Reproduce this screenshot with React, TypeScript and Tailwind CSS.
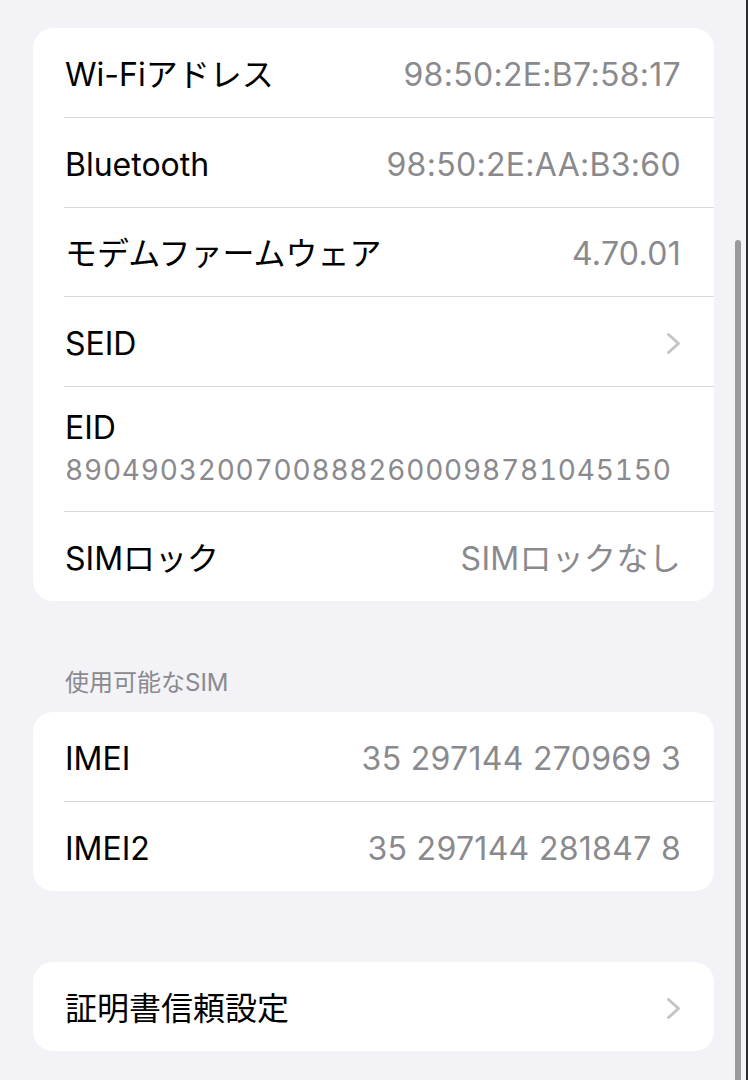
import React from 'react';

const Chevron: React.FC = () => (
  <svg width="15" height="23" viewBox="0 0 15 23" fill="none" className="shrink-0">
    <path d="M2.5 2.5 L12.5 11.5 L2.5 20.5" stroke="#c4c4c7" strokeWidth="3" strokeLinecap="round" strokeLinejoin="round" />
  </svg>
);

type RowProps = {
  label: string;
  value?: string;
  chevron?: boolean;
  first?: boolean;
  h: string;
};

const Row: React.FC<RowProps> = ({ label, value, chevron, first, h }) => (
  <div
    className={`${h} ml-[31px] pl-[1px] pr-[33px] pt-1 flex items-center justify-between ${
      first ? '' : 'border-t border-[#d8d8dc]'
    }`}
  >
    <span className="text-[32px] leading-[40px] text-black whitespace-nowrap">{label}</span>
    {value && (
      <span className="text-[32px] leading-[40px] tracking-[0.3px] text-[#8a8a8e] whitespace-nowrap">{value}</span>
    )}
    {chevron && <Chevron />}
  </div>
);

export default function App() {
  return (
    <div className="relative h-[1080px] w-full overflow-hidden bg-[#f2f2f7] border-r-2 border-[#2c2c2e] font-[Inter,'Noto_Sans_CJK_JP',sans-serif]">
      <div className="pt-[28px] pl-[33px] pr-[32px]">
        {/* Network info */}
        <div className="bg-white rounded-[20px]">
          <Row first h="h-[89px]" label="Wi-Fiアドレス" value="98:50:2E:B7:58:17" />
          <Row h="h-[90px]" label="Bluetooth" value="98:50:2E:AA:B3:60" />
          <Row h="h-[89px]" label="モデムファームウェア" value="4.70.01" />
          <Row h="h-[90px]" label="SEID" chevron />
          <div className="h-[125px] ml-[31px] pl-[1px] pr-[33px] pt-[2px] flex flex-col justify-center border-t border-[#d8d8dc]">
            <span className="text-[32px] leading-[40px] text-black">EID</span>
            <span className="text-[28px] leading-[44px] text-[#8a8a8e] tracking-[0.8px] tabular-nums whitespace-nowrap">
              89049032007008882600098781045150
            </span>
          </div>
          <Row h="h-[90px]" label="SIMロック" value="SIMロックなし" />
        </div>

        {/* Available SIM */}
        <div className="h-[111px] flex items-end pl-[32px] pb-[15px]">
          <span className="text-[24px] leading-[28px] text-[#8a8a8e]">使用可能なSIM</span>
        </div>
        <div className="bg-white rounded-[20px]">
          <Row first h="h-[89px]" label="IMEI" value="35 297144 270969 3" />
          <Row h="h-[90px]" label="IMEI2" value="35 297144 281847 8" />
        </div>

        {/* Certificates */}
        <div className="h-[71px]" />
        <div className="bg-white rounded-[20px]">
          <Row first h="h-[89px]" label="証明書信頼設定" chevron />
        </div>
      </div>

      {/* scroll indicator */}
      <div className="absolute left-[735px] top-[240px] w-[6px] h-[900px] rounded-full bg-[#9a9a9e]" />
    </div>
  );
}
